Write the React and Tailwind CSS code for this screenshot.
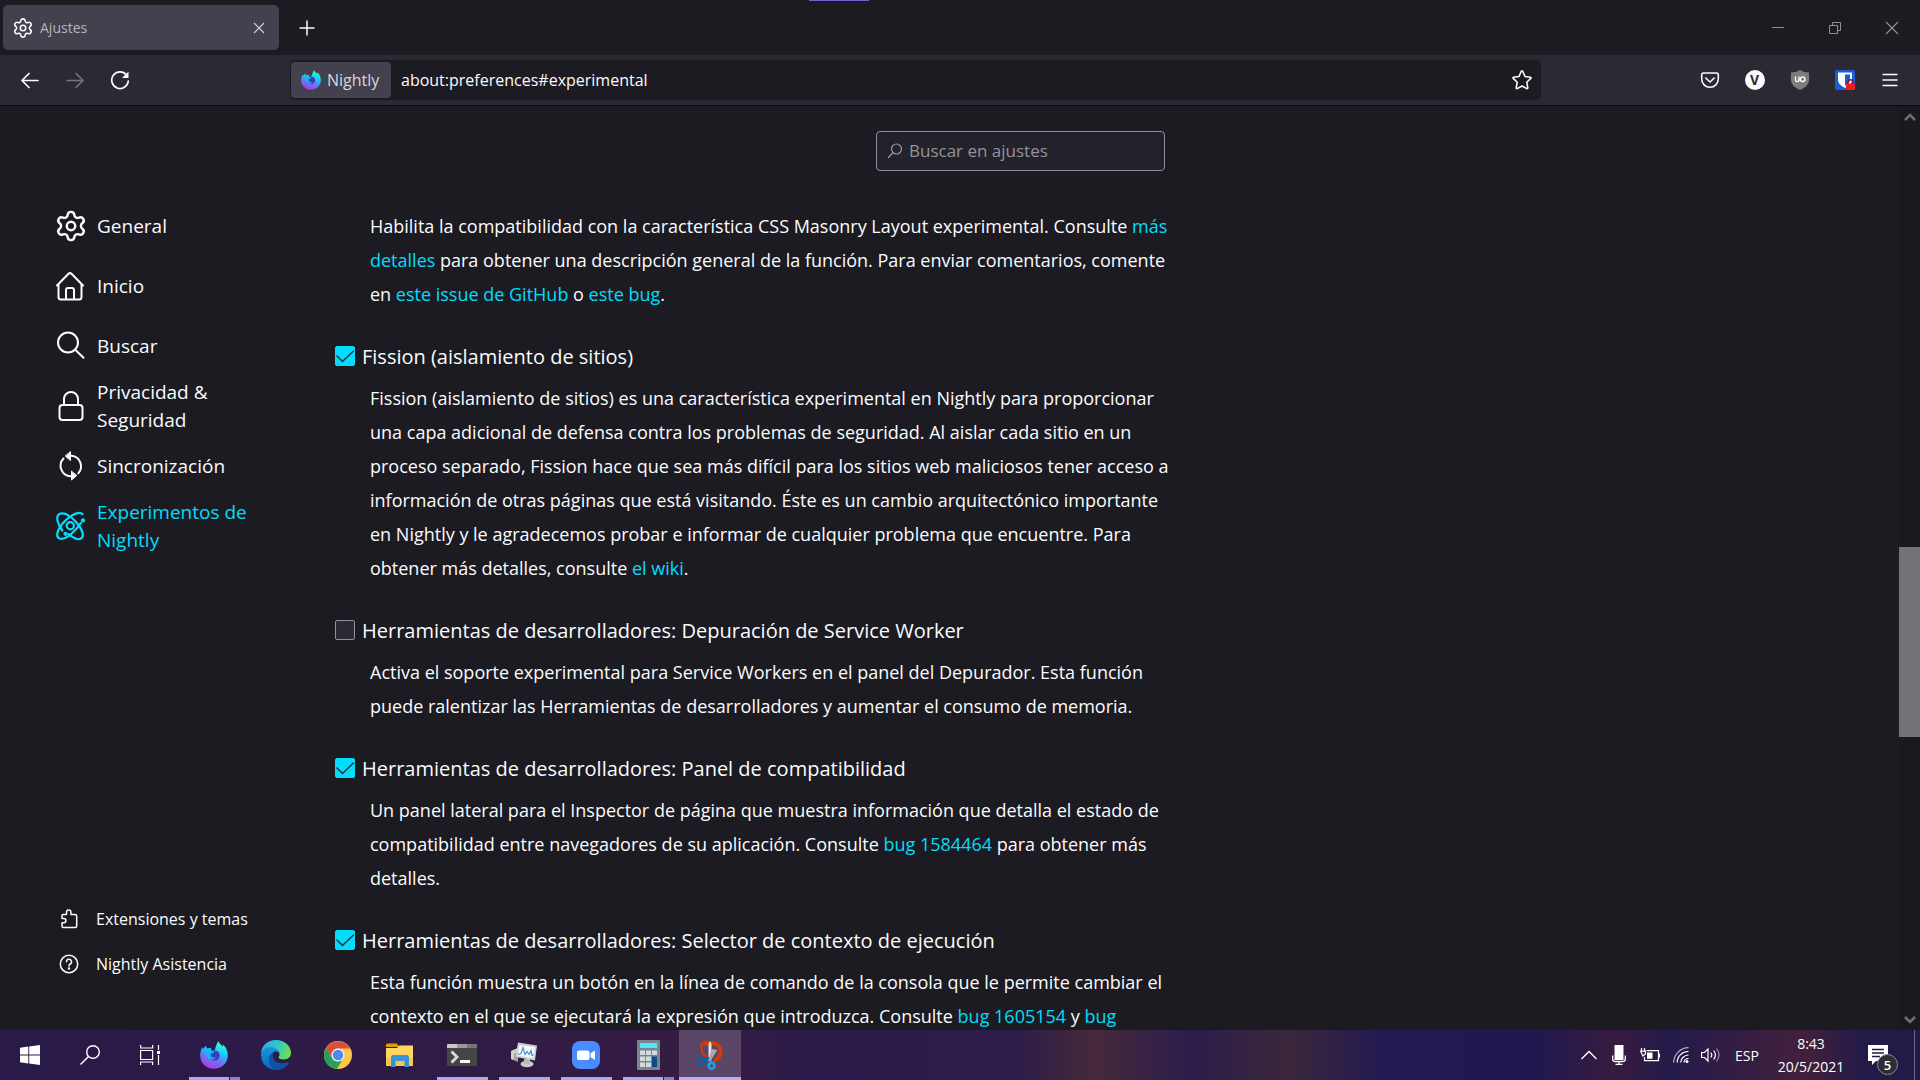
import React, { useState } from 'react';
import { Settings } from 'lucide-react';

const Gear = ({ className }) => <Settings className={className} strokeWidth={1.7} />;

const HomeIcon = () => (
  <svg viewBox="0 0 30 30" className="size-[30px]" fill="none" stroke="currentColor" strokeWidth="2" strokeLinecap="round" strokeLinejoin="round">
    <path d="M1 14.5 12.5 2.8q1.5-1.4 3 0L27 14.5" />
    <path d="M2.500 13.500V26q0 2.500 2.500 2.500h18q2.500 0 2.500-2.500V13.500" />
    <path d="M10 28v-9q0-2 2-2h4q2 0 2 2v9" />
  </svg>
);

const SearchIcon = () => (
  <svg viewBox="0 0 30 30" className="size-[30px]" fill="none" stroke="currentColor" strokeWidth="2" strokeLinecap="round">
    <circle cx="12" cy="11.500" r="10" />
    <path d="m19.500 19 8 7.800" />
  </svg>
);

const LockIcon = () => (
  <svg viewBox="0 0 30 30" className="size-[30px]" fill="none" stroke="currentColor" strokeWidth="2">
    <rect x="3.500" y="14" width="23" height="15" rx="3" />
    <path d="M8 14V8a7 7 0 0 1 14 0v6" />
  </svg>
);

const SyncIcon = () => (
  <svg viewBox="0 0 30 30" className="size-[30px]" fill="none" stroke="currentColor" strokeWidth="2" strokeLinecap="round">
    <path d="M7.500 7.500A10.500 10.500 0 0 0 14.500 25.200" />
    <path d="M15.500 4.800a10.500 10.500 0 0 1 6.800 17.500" />
    <path d="M14.500 1v8.500L9.500 5.200zM15.500 20.500V29l5-4.300z" fill="currentColor" strokeWidth="1" />
  </svg>
);

const AtomIcon = () => (
  <svg viewBox="0 0 30 30" className="size-[30px]" fill="none" stroke="currentColor" strokeWidth="2.200">
    <path d="M25 11.800C21.500 17 11 30 3.300 27.500-2 25 3.500 14.500 11 8 17.500 2 24.500.5 26.500 3.200" strokeLinecap="round" />
    <path d="M6.300 19.500C1.500 13-.5 5.500 3 3.200 7.500.5 14.500 4.500 20 11c6 7 8.500 13.500 5.500 16.200-3 2.500-8.500-.4-13-4" strokeLinecap="round" />
    <circle cx="14.300" cy="14.800" r="3.600" />
    <circle cx="27" cy="9.400" r="2.100" fill="currentColor" stroke="none" />
    <circle cx="9.500" cy="22.800" r="2.100" fill="currentColor" stroke="none" />
  </svg>
);

const PuzzleIcon = () => (
  <svg viewBox="0 0 20 20" className="size-5" fill="none" stroke="currentColor" strokeWidth="1.500" strokeLinejoin="round">
    <path d="M3 6.500Q3 5.500 4 5.500h3.500V3.200a2.200 2.200 0 0 1 4.400 0v2.300H16q1.700 0 1.700 1.700V17q0 1.500-1.500 1.500H4.500Q3 18.500 3 17v-3.300h1.800a2.100 2.100 0 0 0 0-4.200H3z" />
  </svg>
);

const HelpIcon = () => (
  <svg viewBox="0 0 20 20" className="size-5" fill="none" stroke="currentColor" strokeWidth="1.500" strokeLinecap="round">
    <circle cx="10" cy="10" r="8.700" />
    <path d="M7.500 7.800a2.500 2.500 0 1 1 3.700 2.200q-1.200.7-1.200 1.900" />
    <circle cx="10" cy="14.400" r=".5" fill="currentColor" />
  </svg>
);

const NightlyLogo = ({ className, id }) => (
  <svg viewBox="0 0 28 28" className={className}>
    <defs>
      <linearGradient id={id + 'a'} x1=".75" y1="0" x2=".35" y2="1">
        <stop offset="0" stopColor="#54ffbd" />
        <stop offset=".35" stopColor="#10d5f5" />
        <stop offset=".65" stopColor="#5f7cf9" />
        <stop offset="1" stopColor="#b833e1" />
      </linearGradient>
      <radialGradient id={id + 'b'} cx=".5" cy=".4" r=".6">
        <stop offset="0" stopColor="#1f4db5" />
        <stop offset="1" stopColor="#5b2bc9" />
      </radialGradient>
    </defs>
    <path
      fill={`url(#${id}a)`}
      d="M18.500 0c.6 2.500 2.500 3.700 4.300 5.800.2-1 0-1.800-.1-2.500C26 6 27.800 10 27.800 14.500c0 7.400-6 13.300-13.800 13.300S.2 22 .2 14.500c0-3.200.8-6.300 2.600-8.500 0 1 .1 1.600.3 2.100L6 4.500c0 1.300.6 2.300 1.300 2.900l4.200-.7c-.7 1.300-.7 2-.3 2.800l2.800.4c1.800-2.700 2-6.900 4.500-9.900z"
    />
    <circle cx="14.500" cy="14.500" r="5.200" fill={`url(#${id}b)`} />
    <path fill="#17bdf4" d="M5.500 9C8.500 7.800 12 8.800 14.800 10.600c-.8 2.200-3.700 1.800-4 3.400-.3 1.900 3 3.300 5.400 2.300-1.500 3.200-6.500 3.300-8.500.2-1.400-2.200-2.200-5-2.200-7.500z" opacity=".8" />
  </svg>
);

const EdgeLogo = () => (
  <svg viewBox="0 0 30 30" className="size-[30px]">
    <defs>
      <linearGradient id="edgeTop" x1="0" y1=".3" x2="1" y2=".6">
        <stop offset="0" stopColor="#2aa9e8" />
        <stop offset=".5" stopColor="#30c9c5" />
        <stop offset="1" stopColor="#6fe04b" />
      </linearGradient>
      <linearGradient id="edgeBody" x1="0" y1="0" x2="0" y2="1">
        <stop offset="0" stopColor="#1b95dc" />
        <stop offset="1" stopColor="#0b62bd" />
      </linearGradient>
    </defs>
    <path fill="url(#edgeTop)" d="M0 14C0 6 6.500 0 15 0s15 6 15 12.800c0 4-3 6.700-7 6.700-3.300 0-5.500-1-5.500-2 0-.8 1-1.200 1-3C18.500 10.500 14.500 8 10 8 5 8 1 10 0 14z" />
    <path fill="url(#edgeBody)" d="M0 15C.3 10 4 7 9 7c5.500 0 9 3 9.500 6.500-1.500-2-4-2.300-5.500-1.500-1.500 1-2 3-1.500 5 .8 4 5 6.500 9.500 6.500 3 0 5-.8 7-1.500C25.500 27 20.500 30 15 30 6.500 30 0 23.500 0 15z" />
    <path fill="#0c54a0" d="M13 12c-4 1.500-5.500 5-5 9 .6 4 3.500 8 8 9 5-.2 9.500-3 12-8-2 .9-4 1.500-7 1.500-4.500 0-8.700-2.500-9.500-6.500-.5-2 0-4 1.500-5z" />
  </svg>
);

const ChromeLogo = () => (
  <svg viewBox="0 0 28 28" className="size-7">
    <circle cx="14" cy="14" r="14" fill="#fbc948" />
    <path fill="#d9503f" d="M1.900 7A14 14 0 0 1 26.200 7.500H14a6.500 6.500 0 0 0-6 4.200L7.500 16z" />
    <path fill="#26a05a" d="M1.900 7a14 14 0 0 0 11 21l5.200-8.700L14 20.500a6.500 6.500 0 0 1-5.700-3.300z" />
    <circle cx="14" cy="14" r="6.500" fill="#f1f1f1" />
    <circle cx="14" cy="14" r="5.200" fill="#4a8af4" />
  </svg>
);

const ExplorerLogo = () => (
  <svg viewBox="0 0 28 24" className="h-6 w-7">
    <path fill="#e19d00" d="M0 2q0-1.500 1.500-1.500H11L13 4H0z" />
    <path fill="#ffd562" d="M0 5h11l2-2.500h14V23H0z" />
    <path fill="#f9c64a" d="M0 15h27v8H0z" />
    <path fill="#3a95d8" d="M5 24V14q0-2 2-2h14q2 0 2 2v10h-4.500v-6h-9v6z" />
  </svg>
);

const TerminalLogo = () => (
  <svg viewBox="0 0 30 22" className="h-[22px] w-[30px]">
    <rect width="30" height="22" rx="1" fill="#454545" />
    <path fill="#c9c9c9" d="M0 1q0-1 1-1h9v4H0z" />
    <path fill="#999" d="M10 0h10v4H10z" />
    <path fill="#777" d="M20 0h9q1 0 1 1v3H20z" />
    <path d="m4.500 7.500 5.500 5.500-5.500 5.500" fill="none" stroke="#ddd" strokeWidth="2.800" />
    <path fill="#f5f5f5" d="M13 16h10v3H13z" />
  </svg>
);

const MonitorLogo = () => (
  <svg viewBox="0 0 28 26" className="h-[26px] w-7">
    <path fill="#9da29c" d="M1 9 8 6v14l-7-3z" />
    <path fill="#cfd3cc" d="M1 9 8 6l2 2-6 4v6l-3-1z" />
    <ellipse cx="17" cy="22" rx="6.500" ry="3.200" fill="#c9ccca" />
    <path fill="#b9bdba" d="M14 17h6v5h-6z" />
    <path fill="#cdd1cf" d="m8 .5 19 3-2 15L5.500 15z" />
    <path fill="#f6fafc" d="m9.500 3 15.500 2.300-1.600 11L7.500 13.500z" />
    <path d="m8 12.500 3-1 2-6 2 7 2-3 2 3 2-4 1 5 1.500-1" fill="none" stroke="#3a8fc4" strokeWidth="1.100" />
  </svg>
);

const ZoomLogo = () => (
  <svg viewBox="0 0 28 28" className="size-7">
    <rect width="28" height="28" rx="8" fill="#4a8cff" />
    <rect x="5" y="9.500" width="12.500" height="9.500" rx="2" fill="#fff" />
    <path d="M18.500 12.500 23 9.500v9.500l-4.500-3z" fill="#fff" />
  </svg>
);

const CalcLogo = () => (
  <svg viewBox="0 0 23 30" className="h-[30px] w-[23px]">
    <rect width="23" height="30" rx="1" fill="#7a868c" />
    <path fill="#50e6ff" d="M3 3h17v5H3z" />
    <path fill="#d3dbdf" d="M3 10.500h5v4.500H3zM9 10.500h5v4.500H9zM15 10.500h5v4.500h-5zM3 16.500h5V21H3zM9 16.500h5V21H9zM3 22.500h5V27H3zM9 22.500h5V27H9z" />
    <path fill="#114a8b" d="M15 16.500h5V27h-5z" />
  </svg>
);

const SnipLogo = () => (
  <svg viewBox="0 0 26 30" className="h-[30px] w-[26px]">
    <path fill="#d83b01" d="M2.500 6C4 1 10 0 14 1.200 21 1 26 6 25.500 12.500 25 18 20.500 22 16 22.500l1-4c4-2 5.500-5.500 4.500-9C20.500 6 17 4.500 14 5 10 5.500 6 4.500 2.500 6z" />
    <path d="M5 6C3.500 10.500 6 15 10 17" fill="none" stroke="#d83b01" strokeWidth="1.800" />
    <path fill="#e4e4e4" d="M11.500 4q1.500-5 3 0v17h-3z" />
    <path fill="#a9a9a9" d="m20.500 10-6.500 10-2.500-1.500L15 9z" />
    <circle cx="4.500" cy="21.500" r="3.200" fill="none" stroke="#0063b1" strokeWidth="2.600" />
    <circle cx="14.500" cy="25.800" r="2.900" fill="none" stroke="#1a9fe8" strokeWidth="2.600" />
    <path d="m7.500 20 4.500-2" stroke="#0063b1" strokeWidth="2.400" />
    <path d="M13.500 23v-3.500" stroke="#1a9fe8" strokeWidth="2.400" />
  </svg>
);

const ToolbarButton = ({ label, children }) => (
  <button aria-label={label} className="flex h-10 w-[45px] items-center justify-center">
    {children}
  </button>
);

const TabStrip = () => (
  <div className="flex h-[55px] shrink-0 items-center pl-[3px]">
    <div className="flex h-[45px] w-[276px] items-center rounded-[5px] bg-[#42414d] pr-[14px] pl-[9px]">
      <Gear className="size-[22px] text-[#fbfbfe]" />
      <span className="ml-[6px] flex-1 text-[14px] text-[#b5b4bc]">Ajustes</span>
      <button aria-label="Cerrar pestaña">
        <svg viewBox="0 0 12 12" className="size-3" stroke="#d0d0d7" strokeWidth="1.200">
          <path d="m1 1 10 10M11 1 1 11" />
        </svg>
      </button>
    </div>
    <button aria-label="Nueva pestaña" className="ml-[19px]">
      <svg viewBox="0 0 18 18" className="size-[18px]" stroke="#fbfbfe" strokeWidth="1.500">
        <path d="M9 1.500v15M1.500 9h15" />
      </svg>
    </button>
    <div className="flex flex-1 justify-center self-start">
      <div className="mr-[388px] h-px w-[60px] bg-[#6a63d0]" />
    </div>
    <div className="flex items-center text-[#8f8f96]">
      <button aria-label="Minimizar" className="flex w-14 justify-center">
        <svg viewBox="0 0 14 14" className="size-[14px]" stroke="currentColor"><path d="M1 6.500h12" /></svg>
      </button>
      <button aria-label="Restaurar" className="flex w-[57px] justify-center">
        <svg viewBox="0 0 14 14" className="size-[14px]" fill="none" stroke="currentColor">
          <path d="M1.500 4.500h8v8h-8zM4.500 4.500v-3h8v8h-3" />
        </svg>
      </button>
      <button aria-label="Cerrar" className="flex w-[57px] justify-center">
        <svg viewBox="0 0 14 14" className="size-[14px]" stroke="currentColor" strokeWidth="1.200"><path d="m1 1 12 12M13 1 1 13" /></svg>
      </button>
    </div>
  </div>
);

const Toolbar = () => (
  <div className="flex h-[51px] shrink-0 items-center border-b border-[#0c0c0d] bg-[#2b2a33] pr-2 pl-[7px] text-[#fbfbfe]">
    <ToolbarButton label="Atrás">
      <svg viewBox="0 0 20 20" className="size-5" fill="none" stroke="currentColor" strokeWidth="1.700" strokeLinecap="round" strokeLinejoin="round">
        <path d="M18 10.500H2M9 3.500l-7 7 7 7" />
      </svg>
    </ToolbarButton>
    <ToolbarButton label="Adelante">
      <svg viewBox="0 0 20 20" className="size-5 text-[#75747c]" fill="none" stroke="currentColor" strokeWidth="1.700" strokeLinecap="round" strokeLinejoin="round">
        <path d="M2 10.500h16M11 3.500l7 7-7 7" />
      </svg>
    </ToolbarButton>
    <ToolbarButton label="Recargar">
      <svg viewBox="0 0 20 20" className="size-5" fill="none" stroke="currentColor" strokeWidth="1.700" strokeLinecap="round">
        <path d="M16.500 5A8.300 8.300 0 1 0 18.300 11" />
        <path d="M18.500 1.500v6.500H12z" fill="currentColor" stroke="none" />
      </svg>
    </ToolbarButton>
    <div className="mr-[146px] ml-[148px] flex h-10 flex-1 items-center rounded-[5px] bg-[#1c1b22] pr-[9px] pl-px">
      <button className="flex h-9 w-[100px] items-center gap-[6px] rounded-[4px] bg-[#42414d] pl-[10px] text-base text-[#d8d7de]">
        <NightlyLogo className="size-5 shrink-0" id="idn" />
        Nightly
      </button>
      <input
        aria-label="Dirección"
        className="ml-[10px] min-w-0 flex-1 bg-transparent text-base text-[#fbfbfe] outline-none"
        defaultValue="about:preferences#experimental"
      />
      <button aria-label="Añadir a marcadores">
        <svg viewBox="0 0 20 20" className="size-5" fill="none" stroke="currentColor" strokeWidth="1.600" strokeLinejoin="round">
          <path d="M9.300 1.300q.7-1 1.400 0l2.300 5.200 5.500.7q1 .3.300 1.200l-4 3.900 1 5.500q0 1-1 .8L10 16l-4.800 2.600q-1 .2-1-.8l1-5.500-4-3.900q-.7-.9.300-1.200l5.500-.7z" />
        </svg>
      </button>
    </div>
    <ToolbarButton label="Pocket">
      <svg viewBox="0 0 20 20" className="size-5" fill="none" stroke="currentColor" strokeWidth="1.600" strokeLinecap="round" strokeLinejoin="round">
        <path d="M3.500 3h13q1.800 0 1.800 1.800V9a8.300 8.300 0 0 1-16.600 0V4.800Q1.700 3 3.500 3z" />
        <path d="m5.800 8 4.200 4 4.200-4" />
      </svg>
    </ToolbarButton>
    <ToolbarButton label="Cuenta">
      <span className="flex size-5 items-center justify-center rounded-full bg-[#fbfbfe] text-[14px] leading-5 font-bold text-[#2b2a33]">V</span>
    </ToolbarButton>
    <ToolbarButton label="uBlock Origin">
      <svg viewBox="0 0 20 20" className="size-5">
        <path fill="#7d7d7d" d="M10 0q4 2.500 9 2.500V10q0 6-9 10-9-4-9-10V2.500Q6 2.500 10 0z" />
        <path d="M5.500 6.500V10q0 1.700 1.700 1.700T9 10V6.500M9 10h1.500" fill="none" stroke="#fff" strokeWidth="1.300" />
        <circle cx="12.700" cy="9.200" r="2.300" fill="none" stroke="#fff" strokeWidth="1.300" />
      </svg>
    </ToolbarButton>
    <ToolbarButton label="Bitwarden">
      <svg viewBox="0 0 20 20" className="size-5">
        <rect width="20" height="20" rx="2" fill="#175ddc" />
        <path fill="#fff" d="M3 2.500h14V10q0 4.500-7 8-7-3.500-7-8z" />
        <path fill="#175ddc" d="M10 4.500h5V10q0 3-5 5.500z" />
        <path d="M13 14v-1.800a2.500 2.500 0 0 1 5 0V14" fill="none" stroke="#8d1522" strokeWidth="1.600" />
        <rect x="11" y="13.500" width="9" height="6.500" rx="1" fill="#ee1c25" />
      </svg>
    </ToolbarButton>
    <ToolbarButton label="Menú">
      <svg viewBox="0 0 16 14" className="h-[14px] w-4" stroke="currentColor" strokeWidth="1.500">
        <path d="M.5 1.500h15M.5 7h15M.5 12.500h15" />
      </svg>
    </ToolbarButton>
  </div>
);

const categories = [
  { name: 'General', icon: <Gear className="size-[34px] shrink-0" /> },
  { name: 'Inicio', icon: <HomeIcon /> },
  { name: 'Buscar', icon: <SearchIcon /> },
  { name: 'Privacidad & Seguridad', icon: <LockIcon /> },
  { name: 'Sincronización', icon: <SyncIcon /> },
  { name: 'Experimentos de Nightly', icon: <AtomIcon />, active: true },
];

const footerLinks = [
  { name: 'Extensiones y temas', icon: <PuzzleIcon /> },
  { name: 'Nightly Asistencia', icon: <HelpIcon /> },
];

const Sidebar = () => (
  <aside className="flex w-[335px] shrink-0 flex-col pt-[90px] pb-11 text-[#fbfbfe]">
    <nav className="pl-14">
      {categories.map((c) => (
        <a
          key={c.name}
          href="#"
          className={`flex h-[60px] w-[210px] items-center gap-[11px] text-[19px] leading-7 ${c.active ? 'text-[#00ddff]' : ''}`}
        >
          <span className="flex w-[30px] shrink-0 justify-center">{c.icon}</span>
          {c.name}
        </a>
      ))}
    </nav>
    <div className="mt-auto pl-[54px]">
      {footerLinks.map((l) => (
        <a key={l.name} href="#" className="flex h-[45px] items-center gap-3 text-base">
          <span className="flex w-[30px] justify-center">{l.icon}</span>
          {l.name}
        </a>
      ))}
    </div>
  </aside>
);

const Link = ({ children }) => <a href="#" className="text-[#00ddff]">{children}</a>;

const Description = ({ children }) => (
  <p className="pl-[35px] text-[18px] leading-[34px] whitespace-nowrap">{children}</p>
);

const Experiment = ({ title, on, children }) => {
  const [checked, setChecked] = useState(on);
  return (
    <section>
      <label className="flex items-start gap-[7px] pt-[31px] pb-[9px] text-[20px] leading-[30px] whitespace-nowrap">
        <span className="grid h-7 w-5 shrink-0 content-center">
          <input
            type="checkbox"
            checked={checked}
            onChange={() => setChecked(!checked)}
            className="col-start-1 row-start-1 size-5 appearance-none rounded-[2px] border border-[#8f8f9d] bg-[#2b2a33] checked:border-[#00ddff] checked:bg-[#00ddff]"
          />
          {checked && (
            <svg viewBox="0 0 20 20" className="pointer-events-none col-start-1 row-start-1 size-5" fill="none" stroke="#2b2a33" strokeWidth="1.500" strokeLinecap="round">
              <path d="m2 10 5.500 5.500 11-10.500" />
            </svg>
          )}
        </span>
        {title}
      </label>
      <Description>{children}</Description>
    </section>
  );
};

const Scrollbar = () => (
  <div className="flex w-[21px] shrink-0 flex-col bg-[#1a191f] text-[#6f6f74]">
    <button aria-label="Subir" className="flex h-[21px] items-center justify-center">
      <svg viewBox="0 0 12 8" className="h-2 w-3" fill="none" stroke="currentColor" strokeWidth="2.500"><path d="m1 7 5-5 5 5" /></svg>
    </button>
    <div className="grow-[420]" />
    <div className="grow-[190] bg-[#737277]" />
    <div className="grow-[272]" />
    <button aria-label="Bajar" className="flex h-[21px] items-center justify-center">
      <svg viewBox="0 0 12 8" className="h-2 w-3" fill="none" stroke="currentColor" strokeWidth="2.500"><path d="m1 1 5 5 5-5" /></svg>
    </button>
  </div>
);

const Preferences = () => (
  <main className="flex min-h-0 flex-1 overflow-hidden">
    <Sidebar />
    <div className="w-[830px] pt-[25px] text-[#fbfbfe]">
      <div className="mb-[38px] ml-auto flex h-10 w-[289px] items-center gap-[6px] rounded-[4px] border border-[#8f8f9d] bg-[#23222b] px-[10px]">
        <svg viewBox="0 0 16 16" className="size-4 shrink-0" fill="none" stroke="#9a99a3" strokeWidth="1.200">
          <circle cx="9.500" cy="6" r="5" />
          <path d="M6 9.500 1 15" />
        </svg>
        <input
          aria-label="Buscar en ajustes"
          placeholder="Buscar en ajustes"
          className="min-w-0 flex-1 bg-transparent text-[17px] outline-none placeholder:text-[#94939c]"
        />
      </div>
      <Description>
        Habilita la compatibilidad con la característica CSS Masonry Layout experimental. Consulte <Link>más<br />
        detalles</Link> para obtener una descripción general de la función. Para enviar comentarios, comente<br />
        en <Link>este issue de GitHub</Link> o <Link>este bug</Link>.
      </Description>
      <Experiment title="Fission (aislamiento de sitios)" on={true}>
        Fission (aislamiento de sitios) es una característica experimental en Nightly para proporcionar<br />
        una capa adicional de defensa contra los problemas de seguridad. Al aislar cada sitio en un<br />
        proceso separado, Fission hace que sea más difícil para los sitios web maliciosos tener acceso a<br />
        información de otras páginas que está visitando. Éste es un cambio arquitectónico importante<br />
        en Nightly y le agradecemos probar e informar de cualquier problema que encuentre. Para<br />
        obtener más detalles, consulte <Link>el wiki</Link>.
      </Experiment>
      <Experiment title="Herramientas de desarrolladores: Depuración de Service Worker" on={false}>
        Activa el soporte experimental para Service Workers en el panel del Depurador. Esta función<br />
        puede ralentizar las Herramientas de desarrolladores y aumentar el consumo de memoria.
      </Experiment>
      <Experiment title="Herramientas de desarrolladores: Panel de compatibilidad" on={true}>
        Un panel lateral para el Inspector de página que muestra información que detalla el estado de<br />
        compatibilidad entre navegadores de su aplicación. Consulte <Link>bug 1584464</Link> para obtener más<br />
        detalles.
      </Experiment>
      <Experiment title="Herramientas de desarrolladores: Selector de contexto de ejecución" on={true}>
        Esta función muestra un botón en la línea de comando de la consola que le permite cambiar el<br />
        contexto en el que se ejecutará la expresión que introduzca. Consulte <Link>bug 1605154</Link> y <Link>bug</Link>
      </Experiment>
    </div>
    <div className="flex-1" />
    <Scrollbar />
  </main>
);

// bar: 'one' = single window, 'many' = several windows, 'active' = focused
const apps = [
  { name: 'Firefox Nightly', icon: <NightlyLogo className="size-7" id="tbn" />, bar: 'many' },
  { name: 'Microsoft Edge', icon: <EdgeLogo /> },
  { name: 'Google Chrome', icon: <ChromeLogo /> },
  { name: 'Explorador de archivos', icon: <ExplorerLogo /> },
  { name: 'Terminal', icon: <TerminalLogo />, bar: 'one' },
  { name: 'Monitor de rendimiento', icon: <MonitorLogo />, bar: 'one' },
  { name: 'Zoom', icon: <ZoomLogo />, bar: 'one' },
  { name: 'Calculadora', icon: <CalcLogo />, bar: 'many' },
  { name: 'Recortes', icon: <SnipLogo />, bar: 'active' },
];

const AppButton = ({ app }) => (
  <button
    aria-label={app.name}
    className={`flex h-full w-[62px] flex-col items-center ${app.bar === 'active' ? 'bg-[#5b4668]' : ''}`}
  >
    <span className="flex h-[47px] items-center pt-[3px]">{app.icon}</span>
    {app.bar === 'one' && <span className="h-[3px] w-[51px] bg-[#aea6f0]" />}
    {app.bar === 'active' && <span className="h-[3px] w-full bg-[#b9aef5]" />}
    {app.bar === 'many' && (
      <span className="flex h-[3px] w-[51px] gap-px">
        <span className="flex-1 bg-[#aea6f0]" />
        <span className="w-[10px] bg-[#8b83bd]" />
      </span>
    )}
  </button>
);

const Taskbar = () => (
  <footer className="flex h-[50px] shrink-0 items-center bg-[linear-gradient(90deg,#2a1a49_0%,#2d1a48_14%,#301b45_24%,#351c42_38%,#2b1a4a_42%,#2d1d49_53%,#46293a_57%,#2b1d4c_62%,#3b273b_67%,#231951_72%,#20184f_80%,#371b40_84%,#241a4a_87%,#42203c_94%,#231a48_97%,#231a48_100%)] text-white">
    <button aria-label="Inicio" className="flex w-[60px] justify-center">
      <svg viewBox="0 0 20 20" className="size-5" fill="#fff">
        <path d="M0 2.800 8.300 1.600v7.900H0zM9.200 1.500 20 0v9.500H9.200zM0 10.500h8.300v7.900L0 17.200zM9.200 10.500H20V20L9.200 18.500z" />
      </svg>
    </button>
    <button aria-label="Buscar" className="flex w-[60px] justify-center">
      <svg viewBox="0 0 20 20" className="size-5" fill="none" stroke="#fff" strokeWidth="1.400">
        <circle cx="13" cy="7" r="6.300" />
        <path d="M8.500 11.500.5 19.500" />
      </svg>
    </button>
    <button aria-label="Vista de tareas" className="mr-[3px] flex w-[60px] justify-center">
      <svg viewBox="0 0 20 20" className="size-5" fill="none" stroke="#fff" strokeWidth="1.200">
        <path d="M.6 5.500h12v9H.6zM.6 0v3h12V0M.6 20v-3h12v3M18.500 0v5M18.500 10v10" />
        <path d="M17 6h3v3h-3z" fill="#fff" stroke="none" />
      </svg>
    </button>
    {apps.map((app) => <AppButton key={app.name} app={app} />)}
    <div className="flex-1" />
    {/* System tray */}
    <div className="flex h-full items-center">
      <button aria-label="Iconos ocultos" className="flex w-[30px] justify-center">
        <svg viewBox="0 0 16 10" className="h-[10px] w-4" fill="none" stroke="#fff" strokeWidth="1.400"><path d="m.5 9 7.500-7.500L15.500 9" /></svg>
      </button>
      <button aria-label="Micrófono" className="flex w-[30px] justify-center">
        <svg viewBox="0 0 14 20" className="h-5 w-[14px]" fill="none" stroke="#fff" strokeWidth="1.300">
          <path d="M2.500 0h9v15h-9z" fill="#fff" stroke="none" />
          <path d="M.7 10.500V14q0 2.500 2.500 2.500h7.600q2.500 0 2.500-2.500v-3.500M7 16.500v3M3.500 19.300h7" />
        </svg>
      </button>
      <button aria-label="Batería" className="flex w-[31px] justify-center">
        <svg viewBox="0 0 20 14" className="h-[14px] w-5" fill="none" stroke="#fff" strokeWidth="1.200">
          <path d="M6.500 2.600h12v10h-14V9M19.400 5.500v4" />
          <path d="M7 4.500h5.500v6.300H7z" fill="#fff" stroke="none" />
          <path d="M1.500 0v3M4.500 0v3M.6 3.200h4.800V6L3 8z" />
        </svg>
      </button>
      <button aria-label="Red" className="flex w-[31px] justify-center">
        <svg viewBox="0 0 16 16" className="size-4" fill="none" stroke="#fff" strokeWidth="1.200">
          <path d="M.7 15.500A15 15 0 0 1 15.500.7" opacity=".65" />
          <path d="M4.200 15.500A11 11 0 0 1 15.500 4.500M7.700 15.500a8 8 0 0 1 7.800-7.500" />
          <path d="M11 15.500a4.500 4.500 0 0 1 4.500-4" />
          <circle cx="14" cy="14.500" r="1.500" fill="#fff" stroke="none" />
        </svg>
      </button>
      <button aria-label="Volumen" className="flex w-[30px] justify-center">
        <svg viewBox="0 0 20 18" className="h-[18px] w-5" fill="none" stroke="#fff" strokeWidth="1.200">
          <path d="M.6 6.500h2.900L7 3v12l-3.500-3.500H.6z" />
          <path d="M9.800 6.500q2 2.500 0 5M12.600 4.500q3.600 4.500 0 9" />
          <path d="M15.500 2.500q5 6.500 0 13" opacity=".5" />
        </svg>
      </button>
      <button className="w-[39px] pl-[3px] text-center text-[14px]">ESP</button>
      <button className="w-[92px] text-center text-[14px] leading-[23px]">
        <span className="block">8:43</span>
        <span className="block">20/5/2021</span>
      </button>
      <button aria-label="Notificaciones" className="mr-[15px] ml-[11px] flex w-[31px]">
        <span className="relative">
          <svg viewBox="0 0 20 20" className="size-5">
            <path fill="#fff" d="M0 0h20v16H8l-4 4v-4H0z" />
            <path d="M4 4.500h12M4 8h12M4 11.500h8" stroke="#231a48" strokeWidth="1.300" />
          </svg>
          <span className="absolute top-[9px] left-[9px] flex size-[21px] items-center justify-center rounded-full border border-[#8b8b90] bg-[#2d2d33] text-[13px] leading-4 font-semibold">5</span>
        </span>
      </button>
      <div className="mr-[5px] h-full w-px bg-[#6f6a86]" />
    </div>
  </footer>
);

export default function App() {
  return (
    <div className="flex h-screen flex-col overflow-hidden bg-[#1c1b22] font-['Segoe_UI','Open_Sans','Noto_Sans',sans-serif]">
      <TabStrip />
      <Toolbar />
      <Preferences />
      <Taskbar />
    </div>
  );
}
